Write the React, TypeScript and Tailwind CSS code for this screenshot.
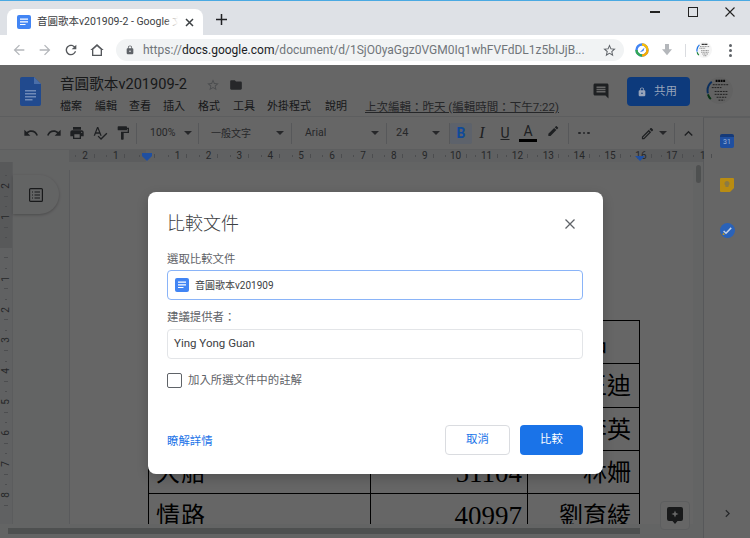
import React from "react";

const P = {
  back: "M20 11H7.83l5.59-5.59L12 4l-8 8 8 8 1.41-1.41L7.83 13H20v-2z",
  forward: "M12 4l-1.41 1.41L16.17 11H4v2h12.17l-5.58 5.59L12 20l8-8z",
  reload: "M17.65 6.35C16.2 4.9 14.21 4 12 4c-4.42 0-7.99 3.58-7.99 8s3.57 8 7.99 8c3.73 0 6.84-2.55 7.73-6h-2.08c-.82 2.33-3.04 4-5.65 4-3.31 0-6-2.69-6-6s2.69-6 6-6c1.66 0 3.14.69 4.22 1.78L13 11h7V4l-2.35 2.35z",
  lock: "M18 8h-1V6c0-2.76-2.24-5-5-5S7 3.24 7 6v2H6c-1.1 0-2 .9-2 2v10c0 1.1.9 2 2 2h12c1.1 0 2-.9 2-2V10c0-1.1-.9-2-2-2zm-6 9c-1.1 0-2-.9-2-2s.9-2 2-2 2 .9 2 2-.9 2-2 2zm3.1-9H8.9V6c0-1.71 1.39-3.1 3.1-3.1 1.71 0 3.1 1.39 3.1 3.1v2z",
  star: "M22 9.24l-7.19-.62L12 2 9.19 8.63 2 9.24l5.46 4.73L5.82 21 12 17.27 18.18 21l-1.63-7.03L22 9.24zM12 15.4l-3.76 2.27 1-4.28-3.32-2.88 4.38-.38L12 6.1l1.71 4.04 4.38.38-3.32 2.88 1 4.28L12 15.4z",
  folder: "M10 4H4c-1.1 0-1.99.9-1.99 2L2 18c0 1.1.9 2 2 2h16c1.1 0 2-.9 2-2V8c0-1.1-.9-2-2-2h-8l-2-2z",
  comment: "M21.99 4c0-1.1-.89-2-1.99-2H4c-1.1 0-2 .9-2 2v12c0 1.1.9 2 2 2h14l4 4-.01-18zM18 14H6v-2h12v2zm0-3H6V9h12v2zm0-3H6V6h12v2z",
  undo: "M12.5 8c-2.65 0-5.05.99-6.9 2.6L2 7v9h9l-3.62-3.62c1.39-1.16 3.16-1.88 5.12-1.88 3.54 0 6.55 2.31 7.6 5.5l2.37-.78C21.08 11.03 17.15 8 12.5 8z",
  redo: "M18.4 10.6C16.55 8.99 14.15 8 11.5 8c-4.65 0-8.58 3.03-9.96 7.22L3.9 16c1.05-3.19 4.05-5.5 7.6-5.5 1.95 0 3.73.72 5.12 1.88L13 16h9V7l-3.6 3.6z",
  print: "M19 8H5c-1.66 0-3 1.34-3 3v6h4v4h12v-4h4v-6c0-1.66-1.34-3-3-3zm-3 11H8v-5h8v5zm3-7c-.55 0-1-.45-1-1s.45-1 1-1 1 .45 1 1-.45 1-1 1zm-1-9H6v4h12V3z",
  spell: "M12.45 16h2.09L9.43 3H7.57L2.46 16h2.09l1.12-3h5.64l1.14 3zm-6.02-5L8.5 5.48 10.57 11H6.43zm15.16.59l-8.09 8.09L9.83 16l-1.41 1.41 5.09 5.09L23 13l-1.41-1.41z",
  paint: "M18 4V3c0-.55-.45-1-1-1H5c-.55 0-1 .45-1 1v4c0 .55.45 1 1 1h12c.55 0 1-.45 1-1V6h1v4H9v11c0 .55.45 1 1 1h2c.55 0 1-.45 1-1v-9h8V4h-3z",
  marker: "M17.75 7L14 3.25l-10 10V17h3.75l10-10zm2.96-2.96c.39-.39.39-1.02 0-1.41L18.37.29c-.39-.39-1.02-.39-1.41 0L15 2.25 18.75 6l1.96-1.96z",
  pencil: "M14.06 9.02l.92.92L5.92 19H5v-.92l9.06-9.06M17.66 3c-.25 0-.51.1-.7.29l-1.83 1.83 3.75 3.75 1.83-1.83c.39-.39.39-1.02 0-1.41l-2.34-2.34c-.2-.2-.45-.29-.71-.29zm-3.6 3.19L3 17.25V21h3.75L17.81 9.94l-3.75-3.75z",
  less: "M12 8l-6 6 1.41 1.41L12 10.83l4.59 4.58L18 14z",
  right: "M10 6L8.59 7.41 13.17 12l-4.58 4.59L10 18l6-6z",
  home: "M12 3L2 12h2.5v9h15v-9H22L12 3zm0 3.2l5.5 5V19h-11v-7.8l5.5-5z",
  download: "M9 3h6v8h4.5L12 20l-7.5-9H9z",
};

function Icon({ d, size = 16, className = "" }: { d: string; size?: number; className?: string }) {
  return (
    <svg width={size} height={size} viewBox="0 0 24 24" className={`shrink-0 fill-current ${className}`}>
      <path d={d} />
    </svg>
  );
}

function DocGlyph({ className = "" }: { className?: string }) {
  return (
    <svg viewBox="0 0 14 14" className={className}>
      <rect width="14" height="14" rx="2" fill="#4285f4" />
      <path d="M3 3.5h8v1.2H3zM3 6.2h8v1.2H3zM3 8.9h5.5v1.2H3z" fill="#fff" />
    </svg>
  );
}

function Caret({ className = "" }: { className?: string }) {
  return <span className={`w-0 h-0 border-x-[4px] border-x-transparent border-t-[4px] border-t-[#5f6368] shrink-0 ${className}`} />;
}

function Sep({ className = "" }: { className?: string }) {
  return <span className={`w-px h-[21px] bg-[#dadce0] shrink-0 ${className}`} />;
}

function Tool({ d, className = "" }: { d: string; className?: string }) {
  return (
    <span className={`w-[23px] flex justify-center shrink-0 text-[#4d5156] ${className}`}>
      <Icon d={d} size={16} />
    </span>
  );
}

const hNums = ["2", "1", "", "1", "2", "3", "4", "5", "6", "7", "8", "9", "10", "11", "12", "13", "14", "15", "16", "17", "1"];
const vNums = ["2", "1", "", "1", "2", "3", "4", "5", "6", "7", "8"];
const menu: [string, string][] = [
  ["檔案", "w-[35px]"],
  ["編輯", "w-[34px]"],
  ["查看", "w-[34px]"],
  ["插入", "w-[35px]"],
  ["格式", "w-[35px]"],
  ["工具", "w-[34px]"],
  ["外掛程式", "w-[58px]"],
  ["說明", "w-[40px]"],
];
const rows = [
  ["", "", "玉品", "pr-[32px]"],
  ["", "", "王迪", "pr-[8px]"],
  ["", "", "李英", "pr-[8px]"],
  ["大船", "51104", "林姍", "pr-[8px]"],
  ["情路", "40997", "劉育綾", "pr-[8px]"],
];

function MiniAvatar({ size }: { size: number }) {
  return (
    <svg width={size} height={size} viewBox="0 0 28 28" className="shrink-0">
      <circle cx="14" cy="14" r="14" fill="#f5f5f5" />
      <path d="M2 17A12 12 0 0 1 6 5" stroke="#1a73e8" strokeWidth="2" fill="none" />
      <path d="M2 18A12 12 0 0 0 5 23" stroke="#188038" strokeWidth="2" fill="none" />
      <path d="M10 4h10" stroke="#111" strokeWidth="2.2" strokeDasharray="2 .6" />
      <path d="M7 8h16M6 11h10M9 15h14M9 18h14M11 21h10M13 24h6" stroke="#222" strokeWidth=".8" strokeDasharray="2 .8" />
    </svg>
  );
}

export default function App() {
  return (
    <div className="relative w-[750px] h-[538px] overflow-hidden bg-white font-['Roboto','Noto_Sans_CJK_TC',sans-serif]">
      {/* title bar */}
      <div className="h-[35px] bg-[#dee1e6] border-t border-t-[#4aa9e2] flex items-end pl-[7px]">
        <div className="w-[196px] h-[26px] bg-white rounded-t-[8px] flex items-center pl-[10px] pr-[8px]">
          <DocGlyph className="w-[14px] h-[14px] shrink-0" />
          <div className="relative w-[141px] ml-[6px] overflow-hidden whitespace-nowrap text-[10.5px] text-[#3c4043]">
            音圓歌本v201909-2 - Google 文件
            <span className="absolute right-0 top-0 bottom-0 w-[14px] bg-gradient-to-r from-transparent to-white" />
          </div>
          <svg width="9" height="9" viewBox="0 0 9 9" className="ml-[7px] shrink-0 stroke-[#3c4043]" strokeWidth="1.5">
            <path d="M1 1l7 7M8 1l-7 7" />
          </svg>
        </div>
        <svg width="11" height="11" viewBox="0 0 11 11" className="ml-[13px] mb-[10px] shrink-0 stroke-[#202124]" strokeWidth="1.5">
          <path d="M5.5 0v11M0 5.5h11" />
        </svg>
        <div className="flex-1 self-start flex justify-end items-center pt-[6px] pr-[15px]">
          <span className="w-[10px] h-[1.5px] bg-[#222]" />
          <span className="w-[10px] h-[10px] border-[1.2px] border-[#222] ml-[28px]" />
          <svg width="10" height="10" viewBox="0 0 10 10" className="stroke-[#222] ml-[27px]" strokeWidth="1.1">
            <path d="M.5.5l9 9M9.5.5l-9 9" />
          </svg>
        </div>
      </div>

      {/* browser toolbar */}
      <div className="h-[30px] bg-white flex items-center pl-[11px]">
        <Icon d={P.back} size={16} className="text-[#b4b7bb]" />
        <Icon d={P.forward} size={16} className="text-[#b4b7bb] ml-[10px]" />
        <Icon d={P.reload} size={16} className="text-[#55585c] ml-[10px]" />
        <Icon d={P.home} size={16} className="text-[#55585c] ml-[10px]" />
        <div className="ml-[11px] w-[508px] h-[22px] rounded-full bg-[#f1f3f4] flex items-center pl-[9px] pr-[7px]">
          <Icon d={P.lock} size={10} className="text-[#5f6368]" />
          <span className="ml-[8px] whitespace-nowrap text-[12px] text-[#70757a]">
            https://<span className="text-[#202124]">docs.google.com</span>/document/d/1SjO0yaGgz0VGM0Iq1whFVFdDL1z5bIJjB...
          </span>
          <Icon d={P.star} size={15} className="text-[#5f6368] ml-auto" />
        </div>
        <svg width="14" height="14" viewBox="0 0 14 14" className="ml-[11px] shrink-0">
          <circle cx="7" cy="7" r="5.5" fill="none" stroke="#4285f4" strokeWidth="2.4" />
          <path d="M7 1.5A5.5 5.5 0 0 1 12.5 7" fill="none" stroke="#fbbc05" strokeWidth="2.4" />
          <path d="M12.5 7A5.5 5.5 0 0 1 7 12.5" fill="none" stroke="#f9ab00" strokeWidth="2.4" />
          <path d="M1.5 7A5.5 5.5 0 0 0 7 12.5" fill="none" stroke="#34a853" strokeWidth="2.4" />
          <path d="M4.8 9.2L8 6l1.5-1.5L8.5 8z" fill="#4285f4" />
        </svg>
        <Icon d={P.download} size={16} className="text-[#b4b7bb] ml-[10px]" />
        <span className="w-px h-[13px] bg-[#dadce0] ml-[10px] shrink-0" />
        <span className="ml-[10px]"><MiniAvatar size={16} /></span>
        <span className="ml-[17px] flex flex-col gap-[2px]">
          <span className="w-[3px] h-[3px] rounded-full bg-[#5f6368]" />
          <span className="w-[3px] h-[3px] rounded-full bg-[#5f6368]" />
          <span className="w-[3px] h-[3px] rounded-full bg-[#5f6368]" />
        </span>
      </div>

      {/* docs */}
      <div className="relative h-[473px] bg-white flex flex-col">
        <header className="h-[52px] shrink-0 flex pl-[20px] border-b border-b-[#e8eaed]">
          <svg width="21" height="29" viewBox="0 0 21 29" className="relative z-10 mt-[12px] shrink-0">
            <path d="M2 0h12l7 7v20a2 2 0 0 1-2 2H2a2 2 0 0 1-2-2V2a2 2 0 0 1 2-2z" fill="#214a8e" />
            <path d="M14 0l7 7h-7z" fill="#4a6ea8" />
            <path d="M5 13h11v1.4H5zM5 16h11v1.4H5zM5 19h11v1.4H5zM5 22h7.5v1.4H5z" fill="#6f8ab8" />
          </svg>
          <div className="ml-[19px] w-[505px] flex flex-col">
            <div className="mt-[10px] h-[20px] flex items-center">
              <span className="w-[128px] whitespace-nowrap text-[14.6px] text-[#3c4043]">音圓歌本v201909-2</span>
              <Icon d={P.star} size={14} className="text-[#bdc1c6] ml-[18px]" />
              <Icon d={P.folder} size={14} className="text-[#5f6368] ml-[9px]" />
            </div>
            <div className="mt-[4px] flex items-center text-[11px] text-[#3c4043] whitespace-nowrap">
              {menu.map(([t, w]) => (
                <span key={t} className={`${w} shrink-0`}>{t}</span>
              ))}
              <span className="underline text-[#5f6368] text-[11.5px]">上次編輯：昨天 (編輯時間：下午7:22)</span>
            </div>
          </div>
          <Icon d={P.comment} size={18} className="text-[#4d5156] mt-[17px] ml-[27px]" />
          <button className="relative z-10 ml-[17px] mt-[12px] w-[63px] h-[29px] rounded-[4px] bg-[#0d3a7c] flex items-center pl-[10px] text-[#98a4ba] text-[11.5px]">
            <Icon d={P.lock} size={10} />
            <span className="ml-[7px]">共用</span>
          </button>
          <span className="ml-[16px] mt-[12px]"><MiniAvatar size={27} /></span>
        </header>

        <div className="flex-1 min-h-0 flex">
          <div className="w-[703px] shrink-0 flex flex-col">
            {/* format toolbar */}
            <div className="h-[33px] shrink-0 flex items-center pl-[19px] border-b border-b-[#e8eaed] text-[10.5px] text-[#5f6368] whitespace-nowrap">
              <Tool d={P.undo} />
              <Tool d={P.redo} />
              <Tool d={P.print} />
              <Tool d={P.spell} />
              <Tool d={P.paint} />
              <Sep className="ml-[2px]" />
              <span className="ml-[13px] w-[24px] shrink-0">100%</span>
              <Caret className="ml-[10px]" />
              <Sep className="ml-[6px]" />
              <span className="ml-[12px] w-[40px] shrink-0 text-[10px]">一般文字</span>
              <Caret className="ml-[25px]" />
              <Sep className="ml-[7px]" />
              <span className="ml-[13px] w-[22px] shrink-0">Arial</span>
              <Caret className="ml-[44px]" />
              <Sep className="ml-[7px]" />
              <span className="ml-[9px] w-[14px] shrink-0 text-[11px]">24</span>
              <Caret className="ml-[22px]" />
              <Sep className="ml-[9px]" />
              <span className="relative z-10 w-[22px] h-[21px] shrink-0 rounded-[2px] bg-[#5d626b] text-[#0f4a9a] text-[14px] font-bold flex items-center justify-center">B</span>
              <span className="w-[20px] shrink-0 text-center font-['Liberation_Serif',serif] italic text-[16px] text-[#4d5156]">I</span>
              <span className="ml-[1px] w-[24px] shrink-0 text-center text-[14px] underline text-[#4d5156]">U</span>
              <span className="w-[22px] shrink-0 flex flex-col items-center text-[14px] leading-[15px] text-[#4d5156]">
                A
                <span className="w-[18px] h-[3px] bg-black" />
              </span>
              <Icon d={P.marker} size={14} className="ml-[7px] text-[#4d5156]" />
              <Sep className="ml-[8px]" />
              <span className="ml-[9px] flex gap-[2px]">
                <span className="w-[2.5px] h-[2.5px] rounded-full bg-[#5f6368]" />
                <span className="w-[2.5px] h-[2.5px] rounded-full bg-[#5f6368]" />
                <span className="w-[2.5px] h-[2.5px] rounded-full bg-[#5f6368]" />
              </span>
              <Icon d={P.pencil} size={15} className="ml-[50px] text-[#4d5156]" />
              <Caret className="ml-[4px]" />
              <Sep className="ml-[7px]" />
              <Icon d={P.less} size={17} className="ml-[5px] text-[#4d5156]" />
            </div>

            {/* horizontal ruler */}
            <div className="relative h-[12px] shrink-0 flex pl-[69.5px] text-[10px] text-[#5f6368] bg-[linear-gradient(to_right,#f8f9fa_69px,#e6e8eb_69px,#e6e8eb_146px,#f1f3f4_146px,#f1f3f4_640px,#e6e8eb_640px)]">
              {hNums.map((n, i) => (
                <span key={i} className="w-[30.9px] shrink-0 h-full flex items-center justify-evenly">
                  <span className="w-px h-[2px] bg-[#bdc1c6]" />
                  <span className="leading-none">{n}</span>
                  <span className="w-px h-[4px] bg-[#bdc1c6]" />
                </span>
              ))}
              <span className="absolute z-10 left-[142px] top-[3px] w-[10px] h-[3px] bg-[#1f4fa0]" />
              <span className="absolute z-10 left-[142px] top-[6px] w-0 h-0 border-x-[5px] border-x-transparent border-t-[5px] border-t-[#1f4fa0]" />
              <span className="absolute z-10 left-[635px] top-[6px] w-0 h-0 border-x-[5px] border-x-transparent border-t-[5px] border-t-[#1f4fa0]" />
            </div>

            {/* document body */}
            <div className="flex-1 min-h-0 flex bg-[#f8f9fa]">
              <div className="w-[13px] shrink-0 pt-[8.5px] flex flex-col text-[10px] text-[#5f6368] bg-[linear-gradient(to_bottom,#dcdee2_86px,#f1f3f4_86px)] border-r border-r-[#e3e5e8]">
                {vNums.map((n, i) => (
                  <span key={i} className="h-[30.9px] shrink-0 flex flex-col items-center justify-evenly">
                    <span className="w-[2px] h-px bg-[#bdc1c6]" />
                    <span className="-rotate-90 leading-none h-[10px]">{n}</span>
                    <span className="w-[4px] h-px bg-[#bdc1c6]" />
                  </span>
                ))}
              </div>
              <div className="w-[56px] shrink-0 pt-[13px]">
                <div className="w-[46px] h-[39px] rounded-r-[20px] bg-[#f8f9fa] shadow-[0_1px_3px_rgba(0,0,0,0.25)] flex items-center justify-center">
                  <svg width="14" height="14" viewBox="0 0 14 14" className="stroke-[#3c4043] fill-none" strokeWidth="1.2">
                    <rect x=".6" y=".6" width="12.8" height="12.8" rx="1" />
                    <path d="M3 4h1M5.5 4H11M3 7h1M5.5 7H11M3 10h1M5.5 10H11" />
                  </svg>
                </div>
              </div>
              <div className="flex-1 mt-[8px] min-w-0 overflow-hidden bg-white border-l border-l-[#dfe1e5] pl-[78px] pt-[150px]">
                <table className="w-[491px] table-fixed border-collapse text-black font-['Liberation_Serif','Noto_Sans_CJK_TC',serif]">
                  <colgroup>
                    <col className="w-[222px]" />
                    <col className="w-[157px]" />
                    <col className="w-[112px]" />
                  </colgroup>
                  <tbody>
                    {rows.map((r, i) => (
                      <tr key={i} className="h-[43.3px]">
                        <td className="border border-black pl-[7px] pt-[2px] text-[24px] leading-none tracking-[1px]">{r[0]}</td>
                        <td className="border border-black pr-[5px] pt-[2px] text-right text-[27px] leading-none">{r[1]}</td>
                        <td className={`border border-black ${r[3]} pt-[2px] text-right text-[24px] leading-none`}>{r[2]}</td>
                      </tr>
                    ))}
                  </tbody>
                </table>
              </div>
              <div className="w-[10px] shrink-0 pt-[3px] flex justify-center">
                <span className="w-[5px] h-[18px] rounded-full bg-[#c4c7c9]" />
              </div>
            </div>

            {/* horizontal scrollbar */}
            <div className="h-[14px] shrink-0 bg-[#f8f9fa] pt-[4px] pl-[8px]">
              <div className="w-[632px] h-[6px] bg-[#c4c7c9]" />
            </div>
          </div>

          {/* side panel */}
          <aside className="flex-1 border-l border-l-[#dadce0] border-t border-t-[#e8eaed] flex flex-col items-center pt-[16px]">
            <span className="relative z-10 w-[14px] h-[14px] rounded-[2px] bg-[#1f4fa0] border-t-[3px] border-t-[#163a78] text-[#9db2d6] text-[7px] leading-[10px] text-center">31</span>
            <svg width="14" height="14" viewBox="0 0 14 14" className="relative z-10 mt-[30px]">
              <path d="M0 1a1 1 0 0 1 1-1h12a1 1 0 0 1 1 1v9l-4 4H1a1 1 0 0 1-1-1z" fill="#b98c12" />
              <path d="M7 3a2.6 2.6 0 0 0-1.5 4.7V9h3V7.7A2.6 2.6 0 0 0 7 3z" fill="#8a7a45" />
            </svg>
            <svg width="15" height="15" viewBox="0 0 15 15" className="relative z-10 mt-[31px]">
              <circle cx="7.5" cy="7.5" r="7.5" fill="#2a62b8" />
              <path d="M3.6 8l2.4 2.2L11.2 4.9" fill="none" stroke="#c7d3e6" strokeWidth="1.5" />
              <path d="M3 9.5l2 2.2-2.4.4z" fill="#c99a1a" />
            </svg>
            <div className="mt-auto mb-[17px] flex flex-col items-center">
              <Icon d={P.right} size={15} className="text-[#5f6368]" />
            </div>
          </aside>
        </div>

        {/* floating add-comment button */}
        <div className="absolute left-[660px] top-[436px] w-[30px] h-[29px] rounded-[4px] bg-white border border-[#e8eaed] flex items-center justify-center">
          <svg width="16" height="17" viewBox="0 0 16 17">
            <path d="M2 0h12a2 2 0 0 1 2 2v10a2 2 0 0 1-2 2h-3.5L8 17l-2.5-3H2a2 2 0 0 1-2-2V2a2 2 0 0 1 2-2z" fill="#3c4043" />
            <path d="M8 3.4l1 2.6 2.6 1-2.6 1-1 2.6-1-2.6-2.6-1L7 6z" fill="#fff" />
          </svg>
        </div>

        {/* scrim */}
        <div className="absolute inset-0 bg-black/60" />

        {/* dialog */}
        <div className="absolute left-[148px] top-[127px] w-[455px] h-[282px] rounded-[8px] bg-white flex flex-col px-[19px] shadow-[0_4px_12px_rgba(0,0,0,0.2)]">
          <div className="mt-[21px] h-[22px] flex items-center justify-between pr-[2px]">
            <h1 className="text-[18px] font-light text-[#3c4043] leading-none">比較文件</h1>
            <svg width="10" height="10" viewBox="0 0 10 10" className="stroke-[#5f6368] mr-[7px]" strokeWidth="1.3">
              <path d="M.5.5l9 9M9.5.5l-9 9" />
            </svg>
          </div>
          <label className="mt-[17px] text-[11.4px] leading-[14px] text-[#5f6368]">選取比較文件</label>
          <div className="mt-[4px] w-[416px] h-[30px] rounded-[4px] border-[1.5px] border-[#8ab4f8] flex items-center pl-[7px]">
            <DocGlyph className="w-[14px] h-[14px] shrink-0" />
            <span className="ml-[6px] text-[10px] text-[#3c4043]">音圓歌本v201909</span>
          </div>
          <label className="mt-[10px] text-[11.4px] leading-[14px] text-[#5f6368]">建議提供者：</label>
          <div className="mt-[5px] w-[416px] h-[30px] rounded-[4px] border border-[#e3e5e8] flex items-center pl-[6px] text-[11.5px] text-[#3c4043]">
            Ying Yong Guan
          </div>
          <div className="mt-[13px] flex items-center">
            <span className="w-[15px] h-[15px] rounded-[2px] border-[1.5px] border-[#5f6368] shrink-0" />
            <span className="ml-[6px] text-[11.4px] text-[#5f6368]">加入所選文件中的註解</span>
          </div>
          <div className="mt-auto mb-[19px] w-[416px] flex items-center">
            <a className="mt-[3px] text-[11.4px] text-[#1a73e8]">瞭解詳情</a>
            <button className="ml-auto w-[65px] h-[30px] rounded-[4px] border border-[#dadce0] bg-white text-[11.4px] text-[#1a73e8]">取消</button>
            <button className="ml-[10px] w-[63px] h-[30px] rounded-[4px] bg-[#1a73e8] text-[11.4px] text-white">比較</button>
          </div>
        </div>
      </div>
    </div>
  );
}
